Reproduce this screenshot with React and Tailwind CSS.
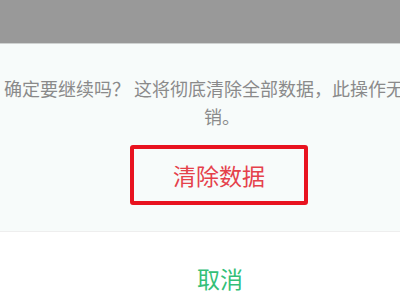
import React from 'react';

const cjk = { fontFamily: '"Noto Sans CJK SC", "Noto Sans", sans-serif' };

export default function App() {
  return (
    <div className="w-[400px] h-[300px] overflow-hidden flex flex-col bg-white" style={cjk}>
      {/* dimmed page behind the dialog */}
      <div className="h-[44px] shrink-0 bg-[#999999] border-b border-[#cfd2d1]" />

      <div className="bg-[#f7fbfa] flex flex-col pt-[31px]">
        <p className="ml-[3px] w-[438px] shrink-0 text-center text-[18px] leading-[27.5px] text-[#8a8a8a]">
          确定要继续吗？ 这将彻底清除全部数据，此操作无法撤销。
        </p>

        <button
          type="button"
          className="ml-[130px] mt-[15px] w-[178px] h-[60px] border-4 border-[#e8131f] rounded-[3px] flex items-center justify-center text-[23px] text-[#e5414b]"
        >
          清除数据
        </button>

        <div className="h-[26px]" />
      </div>

      <div className="h-px bg-[#eeeeee]" />

      <div className="flex-1 bg-white flex justify-center pt-[31px]">
        <span className="ml-[40px] text-[23px] leading-[30px] text-[#34bf78]">取消</span>
      </div>
    </div>
  );
}
